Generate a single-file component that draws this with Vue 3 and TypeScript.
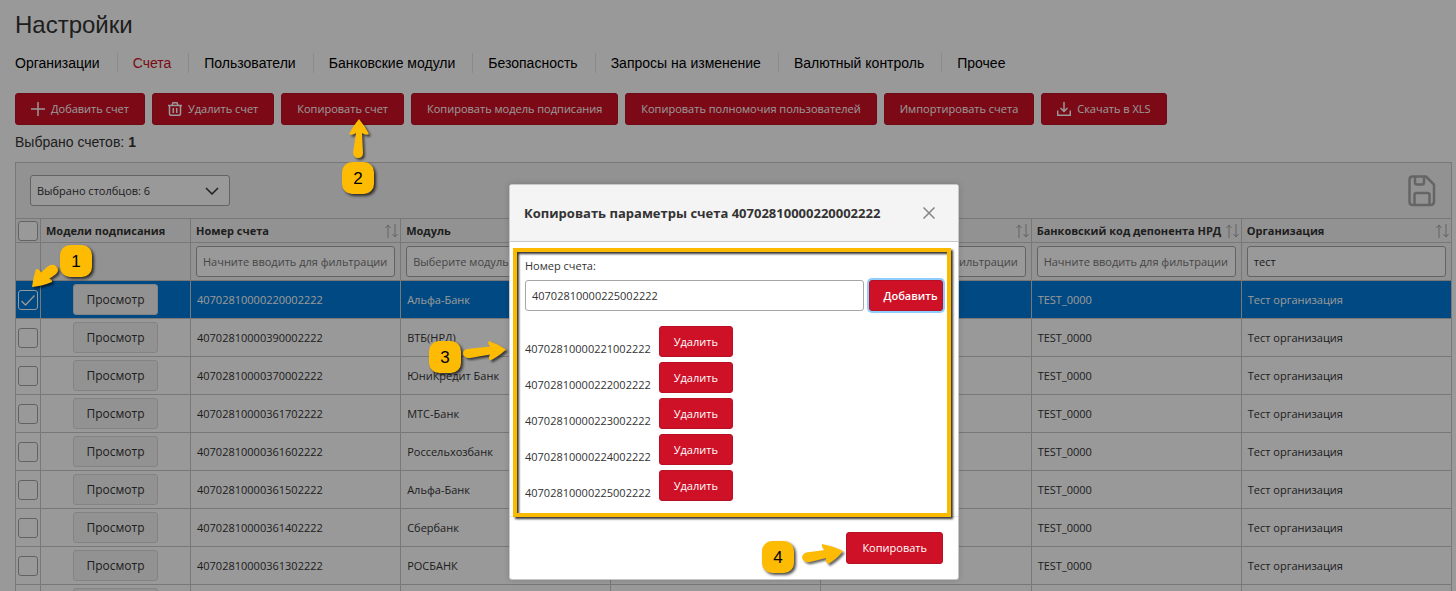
<script setup lang="ts">
import { ref } from 'vue'

interface Account {
  id: number
  number: string
  module: string
  code: string
  organization: string
}

const tabs = [
  'Организации', 'Счета', 'Пользователи', 'Банковские модули',
  'Безопасность', 'Запросы на изменение', 'Валютный контроль', 'Прочее',
]
const activeTab = 'Счета'

const rows: [string, string][] = [
  ['40702810000220002222', 'Альфа-Банк'],
  ['40702810000390002222', 'ВТБ(НРД)'],
  ['40702810000370002222', 'ЮниКредит Банк'],
  ['40702810000361702222', 'МТС-Банк'],
  ['40702810000361602222', 'Россельхозбанк'],
  ['40702810000361502222', 'Альфа-Банк'],
  ['40702810000361402222', 'Сбербанк'],
  ['40702810000361302222', 'РОСБАНК'],
  ['', ''],
]
const accounts: Account[] = rows.map(([number, module], id) => ({
  id,
  number,
  module,
  code: number ? 'TEST_0000' : '',
  organization: number ? 'Тест организация' : '',
}))

const selected = ref<number[]>([0])
const orgFilter = ref('тест')
const newAccount = ref('40702810000225002222')
const targets = ref<string[]>([
  '40702810000221002222',
  '40702810000222002222',
  '40702810000223002222',
  '40702810000224002222',
  '40702810000225002222',
])

function addTarget() {
  if (newAccount.value && !targets.value.includes(newAccount.value)) targets.value.push(newAccount.value)
}
function removeTarget(n: string) {
  targets.value = targets.value.filter((t) => t !== n)
}
</script>

<template>
  <div class="page">
    <main class="content">
      <h1>Настройки</h1>
      <nav class="tabs">
        <a v-for="t in tabs" :key="t" href="#" :class="{ active: t === activeTab }">{{ t }}</a>
      </nav>

      <div class="actions">
        <button class="btn" type="button">
          <svg width="14" height="14" viewBox="0 0 14 14"><path d="M7 0v14M0 7h14" /></svg>Добавить счет
        </button>
        <button class="btn" type="button">
          <svg width="14" height="14" viewBox="0 0 14 14"><path d="M0 3.500h14M1.500 3.500v8.300q0 1.500 1.500 1.500h8q1.500 0 1.500-1.500v-8.300M4 3.500l1-2.800h4l1 2.800M5.300 6v5M8.700 6v5" /></svg>Удалить счет
        </button>
        <button class="btn" type="button">Копировать счет</button>
        <button class="btn" type="button">Копировать модель подписания</button>
        <button class="btn" type="button">Копировать полномочия пользователей</button>
        <button class="btn" type="button">Импортировать счета</button>
        <button class="btn" type="button">
          <svg width="14" height="14" viewBox="0 0 14 14"><path d="M7 0v9M3.500 6l3.500 3.500L10.500 6M.7 8.500v4.800h12.600V8.500" /></svg>Скачать в XLS
        </button>
      </div>

      <p class="count">Выбрано счетов: <b>{{ selected.length }}</b></p>

      <section class="panel">
        <div class="toolbar">
          <button class="dropdown" type="button" aria-haspopup="listbox">
            Выбрано столбцов: 6
            <svg width="14" height="8" viewBox="0 0 14 8"><path d="M1 1l6 6 6-6" /></svg>
          </button>
          <button class="save" type="button" aria-label="Сохранить">
            <svg width="28" height="32" viewBox="0 0 28 32"><path d="M4.500 1.500H18l8 8v17q0 3.500-3.500 3.500H4.500Q1.500 30 1.500 26.500V4.500Q1.500 1.500 4.500 1.500zM7 2v5.500q0 2 2 2h5q2 0 2-2V2M6.500 30V20q0-2 2-2h11q2 0 2 2v10" /></svg>
          </button>
        </div>
        <table>
          <colgroup>
            <col class="c-check" /><col class="c-model" /><col /><col /><col /><col /><col /><col />
          </colgroup>
          <thead>
            <tr class="head">
              <th class="check"><input type="checkbox" aria-label="Выбрать все" /></th>
              <th>Модели подписания</th>
              <th v-for="(h, i) in ['Номер счета', 'Модуль', '', '', 'Банковский код депонента НРД', 'Организация']" :key="i">
                <div class="th">
                  <span>{{ h }}</span>
                  <svg width="13" height="14" viewBox="0 0 13 14"><path d="M3 14V1M.5 4L3 1l2.500 3M10 0v13M7.500 10l2.500 3 2.500-3" /></svg>
                </div>
              </th>
            </tr>
            <tr class="filters">
              <td></td>
              <td></td>
              <td><input type="text" placeholder="Начните вводить для фильтрации" aria-label="Номер счета" /></td>
              <td><input type="text" placeholder="Выберите модуль" aria-label="Модуль" /></td>
              <td><input type="text" aria-label="Фильтр" /></td>
              <td><input type="text" placeholder="Начните вводить для фильтрации" aria-label="Фильтр" /></td>
              <td><input type="text" placeholder="Начните вводить для фильтрации" aria-label="Банковский код депонента НРД" /></td>
              <td><input v-model="orgFilter" type="text" aria-label="Организация" /></td>
            </tr>
          </thead>
          <tbody>
            <tr v-for="a in accounts" :key="a.id" :class="{ selected: selected.includes(a.id) }">
              <td class="check"><input v-model="selected" type="checkbox" :value="a.id" :aria-label="'Счет ' + a.number" /></td>
              <td class="model"><button class="view" type="button">Просмотр</button></td>
              <td>{{ a.number }}</td>
              <td>{{ a.module }}</td>
              <td></td>
              <td></td>
              <td>{{ a.code }}</td>
              <td>{{ a.organization }}</td>
            </tr>
          </tbody>
        </table>
      </section>
    </main>

    <div class="mask">
      <div class="dialog" role="dialog" aria-labelledby="dialog-title">
        <header>
          <h2 id="dialog-title">Копировать параметры счета 40702810000220002222</h2>
          <button class="close" type="button" aria-label="Закрыть">
            <svg width="12" height="12" viewBox="0 0 12 12"><path d="M.5.5l11 11M11.500.5l-11 11" /></svg>
          </button>
        </header>
        <div class="body">
          <label for="acc">Номер счета:</label>
          <div class="add">
            <input id="acc" v-model="newAccount" type="text" />
            <button class="btn focus" type="button" @click="addTarget">Добавить</button>
          </div>
          <ul>
            <li v-for="t in targets" :key="t">
              <span>{{ t }}</span>
              <button class="btn" type="button" @click="removeTarget(t)">Удалить</button>
            </li>
          </ul>
        </div>
        <footer><button class="btn" type="button">Копировать</button></footer>
        <div class="frame"></div>
        <span class="badge b3">3</span>
        <svg class="arrow a3" width="46" height="24" viewBox="0 0 46 24"><path d="M5 9Q1 10 1 13.500Q2 18.500 8 18L28 14.500Q26 18 28 20.500Q36 17 44 9.500Q36 4 27 1Q25 3 28 6.500Z" /></svg>
        <span class="badge b4">4</span>
        <svg class="arrow a4" width="46" height="24" viewBox="0 0 46 24"><path d="M5 10.500Q1 12 1 16Q3 21 9 20L25 16Q24 20 27 22Q36 17 42 9Q32 4 21 2Q20 5 24 8Z" /></svg>
      </div>
    </div>

    <span class="badge b1">1</span>
    <svg class="arrow a1" width="30" height="26" viewBox="0 0 30 26"><path d="M16 3Q21-1 25 2Q29 6 25 10L18 15Q21 15 21 18Q12 22 1 23Q2 14 5 5Q9 5 10 8.500Z" /></svg>
    <span class="badge b2">2</span>
    <svg class="arrow a2" width="24" height="42" viewBox="0 0 24 42"><path d="M12 1Q6 8 2 16Q5 18 9 15L6 35Q7 40 11 40Q16 40 16 35L15 15Q19 18 22 16Q18 8 12 1Z" /></svg>
  </div>
</template>

<style>
body { margin: 0; }
</style>

<style scoped>
* { box-sizing: border-box; }
.page {
  position: relative;
  height: 100vh;
  overflow: hidden;
  background: #fff;
  color: #333;
  font: 11px/16px "Open Sans", "Noto Sans", sans-serif;
}
.content { padding: 9px 4px 0 15px; }
h1 { margin: 0; font: 24px/32px "Liberation Sans", Arial, sans-serif; }
svg { flex: none; fill: none; stroke: currentColor; }
button, input { font: inherit; color: inherit; }
button { cursor: pointer; }

.tabs { display: flex; margin-top: 12px; font: 14px/20px "Liberation Sans", Arial, sans-serif; }
.tabs a { padding: 0 17px 0 15px; border-left: 1px solid #e8e8e8; color: #000; text-decoration: none; white-space: nowrap; }
.tabs a:first-child { padding-left: 0; border-left: 0; }
.tabs a.active { color: #ce1126; }

.actions { display: flex; gap: 7px; margin-top: 20px; }
.btn {
  display: flex;
  align-items: center;
  justify-content: center;
  gap: 6px;
  height: 32px;
  padding: 0 15px;
  border: 1px solid #b81024;
  border-radius: 3px;
  background: #ce1126;
  color: #fff;
  white-space: nowrap;
}
.actions svg { stroke-width: 1.5; }
.count { margin: 8px 0 11px; font: 14px/18px "Liberation Sans", Arial, sans-serif; }

.panel { border: 1px solid #c8c8c8; border-bottom: 0; background: #f4f4f4; }
.toolbar { display: flex; align-items: center; justify-content: space-between; height: 55px; padding: 0 15px 0 14px; }
.dropdown {
  display: flex;
  align-items: center;
  justify-content: space-between;
  width: 200px;
  height: 31px;
  padding: 0 10px 0 6px;
  border: 1px solid #a6a6a6;
  border-radius: 3px;
  background: #fff;
}
.dropdown svg { stroke-width: 1.5; }
.save { display: flex; padding: 0; border: 0; background: none; color: #a8a8a8; }
.save svg { stroke-width: 2.5; }

table { width: calc(100% + 2px); margin: 0 -1px; border-collapse: collapse; table-layout: fixed; background: #fff; }
.c-check { width: 25px; }
.c-model { width: 150px; }
th, td { padding: 0 6px; border: 1px solid #c8c8c8; text-align: left; white-space: nowrap; }
tbody td { height: 38px; }
.head th { height: 24px; padding: 0 5px; background: #f4f4f4; font-weight: 700; }
.th { display: flex; justify-content: space-between; align-items: center; }
.th svg { margin-right: -3px; color: #a6a6a6; }
.filters td { height: 38px; padding: 0 5px; background: #f4f4f4; }
input[type="text"] {
  display: block;
  width: 100%;
  height: 31px;
  padding: 0 6px;
  border: 1px solid #a6a6a6;
  border-radius: 3px;
  background: #fff;
  outline: 0;
}
input::placeholder { color: #757575; opacity: 1; }
.head th.check, td.check { padding: 0 2px; }
input[type="checkbox"] {
  appearance: none;
  display: block;
  width: 20px;
  height: 20px;
  margin: 0;
  border: 1px solid #a6a6a6;
  border-radius: 3px;
  background: #fff;
}
input[type="checkbox"]:checked {
  border-color: #fff;
  background: #007ad9 url("data:image/svg+xml,%3Csvg xmlns='http://www.w3.org/2000/svg' viewBox='0 0 18 18'%3E%3Cpath d='M2.500 10l4 4 9-9.500' fill='none' stroke='white' stroke-width='1.300'/%3E%3C/svg%3E");
}
.model { text-align: center; }
.view { width: 85px; height: 31px; padding: 0; border: 1px solid #dadada; border-radius: 3px; background: #f4f4f4; font-size: 12px; }
.selected td { background: #007ad9; color: #fff; }
.selected .view { color: #333; }

.mask { position: absolute; inset: 0; display: flex; justify-content: center; align-items: flex-start; padding: 184px 0 0 12px; background: rgba(0, 0, 0, 0.4); }
.dialog { position: relative; width: 450px; border: 1px solid #c8c8c8; border-radius: 3px; background: #fff; box-shadow: 0 0 6px rgba(0, 0, 0, 0.16); }
header { display: flex; align-items: center; justify-content: space-between; height: 57px; padding: 0 23px 0 14px; border-bottom: 1px solid #c8c8c8; background: #f4f4f4; }
h2 { margin: 0; font-size: 13px; line-height: 20px; }
.close { display: flex; padding: 0; border: 0; background: none; color: #848484; }
.close svg { stroke-width: 1.5; }
.body { padding: 15px; }
.body label { display: block; line-height: 18px; }
.add { display: flex; gap: 5px; margin-top: 5px; }
.add input { flex: 1; min-width: 0; }
.body .btn { width: 74px; height: 31px; }
.body .focus { padding: 0 5px 0 14px; box-shadow: 0 0 0 2px #8dcdff; font-weight: 600; }
ul { display: grid; gap: 5px; margin: 15px 0 0; padding: 0; list-style: none; }
li { display: flex; align-items: flex-end; gap: 8px; }
footer { display: flex; justify-content: flex-end; padding: 15px; border-top: 1px solid #eaeaea; }

.frame { position: absolute; top: 63px; left: 3px; width: 438px; height: 269px; border: 4px solid #fbba00; filter: drop-shadow(2px 2px 1px rgba(0, 0, 0, 0.8)); pointer-events: none; }
.badge {
  position: absolute;
  width: 32px;
  height: 32px;
  border-radius: 10px;
  background: #fdbb04;
  box-shadow: 2px 2px 3px rgba(0, 0, 0, 0.7);
  color: #000;
  font: 17px/34px "Liberation Sans", Arial, sans-serif;
  text-align: center;
}
.arrow { position: absolute; fill: #fdbb04; stroke: none; filter: drop-shadow(2px 2px 1px rgba(0, 0, 0, 0.6)); }
.b1 { left: 60px; top: 245px; }
.b2 { left: 342px; top: 162px; }
.b3 { left: -81px; top: 156px; }
.b4 { left: 252px; top: 356px; }
.a1 { left: 31px; top: 264px; }
.a2 { left: 347px; top: 118px; }
.a3 { left: -48px; top: 155px; }
.a4 { left: 291px; top: 357px; }
</style>
